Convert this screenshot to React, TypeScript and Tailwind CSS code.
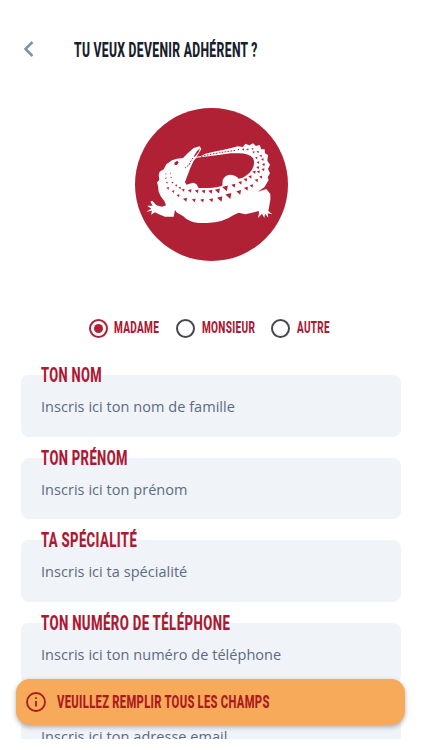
import { useLayoutEffect, useRef, useState } from "react";

const genders = [
  { label: "Madame", width: 45, box: "w-[87.5px]" },
  { label: "Monsieur", width: 53, box: "w-[95px]" },
  { label: "Autre", width: 33, box: "w-[60px]" },
];

const fields = [
  { label: "Ton nom", width: 61, placeholder: "Inscris ici ton nom de famille" },
  { label: "Ton prénom", width: 87, placeholder: "Inscris ici ton prénom" },
  { label: "Ta spécialité", width: 96, placeholder: "Inscris ici ta spécialité" },
  { label: "Ton numéro de téléphone", width: 189, placeholder: "Inscris ici ton numéro de téléphone" },
  { label: "", width: 0, placeholder: "Inscris ici ton adresse email" },
];

// Dark triangular scales on the back and the tail: x, y, size
const scales = [
  [106, 222, 4], [120, 220, 4], [106, 235, 5], [122, 233, 5], [109, 248, 6], [126, 248, 6],
  [112, 265, 8], [137, 257, 7], [128, 275, 8], [148, 264, 7], [143, 287, 9], [158, 271, 9],
  [164, 299, 12], [178, 273, 11], [190, 301, 11], [199, 274, 11], [215, 302, 11], [219, 275, 11],
  [242, 301, 12], [240, 275, 12], [268, 297, 16], [261, 273, 15], [294, 288, 18], [284, 265, 17],
  [325, 277, 14], [309, 257, 12], [347, 266, 12], [329, 249, 11], [363, 258, 10], [345, 240, 11],
  [378, 242, 10], [359, 231, 10], [391, 232, 9], [371, 217, 10], [398, 209, 9], [384, 216, 9],
  [399, 194, 9], [382, 203, 9], [396, 179, 8], [383, 188, 8], [391, 168, 7], [378, 174, 7],
  [382, 156, 7], [369, 157, 7], [366, 147, 6], [351, 149, 7], [338, 149, 7], [324, 149, 5],
];

function Condensed({ text, width, className }: { text: string; width: number; className: string }) {
  const ref = useRef<HTMLSpanElement>(null);
  const [scale, setScale] = useState(0.65);

  useLayoutEffect(() => {
    if (ref.current) setScale(width / ref.current.offsetWidth);
  }, [width]);

  return (
    <span className="block shrink-0" style={{ width }}>
      <span
        ref={ref}
        className={`block w-max origin-left whitespace-nowrap font-['Roboto',sans-serif] font-extrabold uppercase tracking-[0.03em] [word-spacing:-0.02em] ${className}`}
        style={{ transform: `scaleX(${scale})` }}
      >
        {text}
      </span>
    </span>
  );
}

function Logo() {
  return (
    <svg viewBox="14 24 459 459" className="h-[153px] w-[153px]" aria-hidden="true">
      <circle cx="243.5" cy="253.5" r="229.5" fill="#b02136" />
      <path
        fill="#fff"
        d="M208 139L190 144L172 160L158 174L140 176L125 181L108 193L100 208L88 215L85 225L87 240L80 247L83 258L85 275L92 290L102 303L107 316L95 320L78 316L66 302L60 305L67 317L50 317L63 326L48 335L65 332L62 344L74 337L84 342L104 350L130 350L134 330L140 338L158 348Q175 366 205 369H230Q280 367 310 345L325 338L345 343L365 338L385 333L386 340L383 354L395 341L402 354L404 341L414 353L412 340L426 343L414 333L420 300V282L408 267L382 275L402 262L415 240L412 232L419 220L413 207L419 194L411 182L413 165L404 160L403 148L393 148L388 135L377 138L368 130L357 136L345 131L338 141L322 139L300 145L280 149L250 155L225 161L212 168L199 170L213 147ZM198 173L235 169L270 164L300 160H325Q356 160 368 174Q376 190 365 209Q355 224 335 234L325 236Q318 225 300 224Q283 225 277 240L276 257Q262 262 235 264H205L198 252L188 248L178 251L168 254L164 246L172 225L180 204L190 182Z"
      />
      <g fill="#b02136">
        <path d="M132 188L141 182L145 187L140 195L133 195Z" />
        <path d="M209 145L200 153L189 171L195 169L205 156Z" />
        {scales.map(([x, y, s]) => (
          <path
            key={`${x}-${y}`}
            d={`M${x - s / 2} ${y - s / 4}L${x + s / 2} ${y - s / 2}L${x + s / 3} ${y + s / 2}Z`}
          />
        ))}
      </g>
      <path
        d="M188 174L181 183L177 194L164 204M212 169L236 164L268 158L316 151"
        fill="none"
        stroke="#b02136"
        strokeWidth="3"
        strokeDasharray="5 4"
      />
    </svg>
  );
}

function Field({ label, width, placeholder }: (typeof fields)[number]) {
  return (
    <div className="h-[61.5px] shrink-0 rounded-lg bg-[#f0f3f8] px-5">
      <div className="-mt-3.5 h-7">
        {label && <Condensed text={label} width={width} className="text-[21px] leading-7 text-[#ad1933]" />}
      </div>
      <p className="mt-1.5 whitespace-nowrap font-['Open_Sans',sans-serif] text-[14.5px] leading-6 tracking-[0.04px] text-[#5c6b82]">
        {placeholder}
      </p>
    </div>
  );
}

export default function App() {
  return (
    <div className="relative h-[750px] w-[422px] overflow-hidden bg-white">
      <main className="flex h-[739px] flex-col overflow-hidden">
        {/* Header */}
        <header className="flex h-[98px] shrink-0 items-center pl-6">
          <svg viewBox="0 0 10 16" className="mr-[39.5px] h-4 w-2.5" aria-label="Retour">
            <path d="M8.5 1L1.5 8L8.5 15" fill="none" stroke="#8491a3" strokeWidth="2.5" />
          </svg>
          <div className="pt-[3px]">
            <Condensed text="Tu veux devenir adhérent ?" width={184} className="text-[19.5px] leading-7 text-[#18202b]" />
          </div>
        </header>

        <div className="flex shrink-0 justify-center pt-2.5">
          <Logo />
        </div>

        {/* Gender */}
        <div className="mt-[54px] flex h-[26px] shrink-0 pl-[88.5px]">
          {genders.map(({ label, width, box }, i) => (
            <label key={label} className={`flex shrink-0 items-center gap-[6.5px] ${box}`}>
              <span
                className={`flex h-[19px] w-[19px] shrink-0 items-center justify-center rounded-full border-2 ${
                  i === 0 ? "border-[#b02136]" : "border-[#49454f]"
                }`}
              >
                {i === 0 && <span className="h-[9px] w-[9px] rounded-full bg-[#b02136]" />}
              </span>
              <Condensed text={label} width={width} className="text-[16.5px] leading-6 text-[#ad1933]" />
            </label>
          ))}
        </div>

        {/* Form */}
        <form className="mt-[34px] flex flex-col gap-[21px] pl-[21px] pr-[21px]">
          {fields.map((field) => (
            <Field key={field.placeholder} {...field} />
          ))}
        </form>
      </main>

      {/* Toast */}
      <div className="absolute bottom-[25px] left-4 right-[17px] flex h-[46.5px] items-center rounded-[14px] bg-[#f7aa59] pl-2.5 shadow-[0_2px_5px_rgba(0,0,0,0.3)]">
        <svg viewBox="0 0 20 20" className="mr-[10.5px] h-5 w-5 shrink-0" fill="none" stroke="#ad1921">
          <circle cx="10" cy="10" r="9" strokeWidth="1.8" />
          <path d="M10 9V14.5M10 5.2V7" strokeWidth="1.8" />
        </svg>
        <Condensed text="Veuillez remplir tous les champs" width={212.5} className="text-[18.5px] leading-6 text-[#ad1921]" />
      </div>
    </div>
  );
}
